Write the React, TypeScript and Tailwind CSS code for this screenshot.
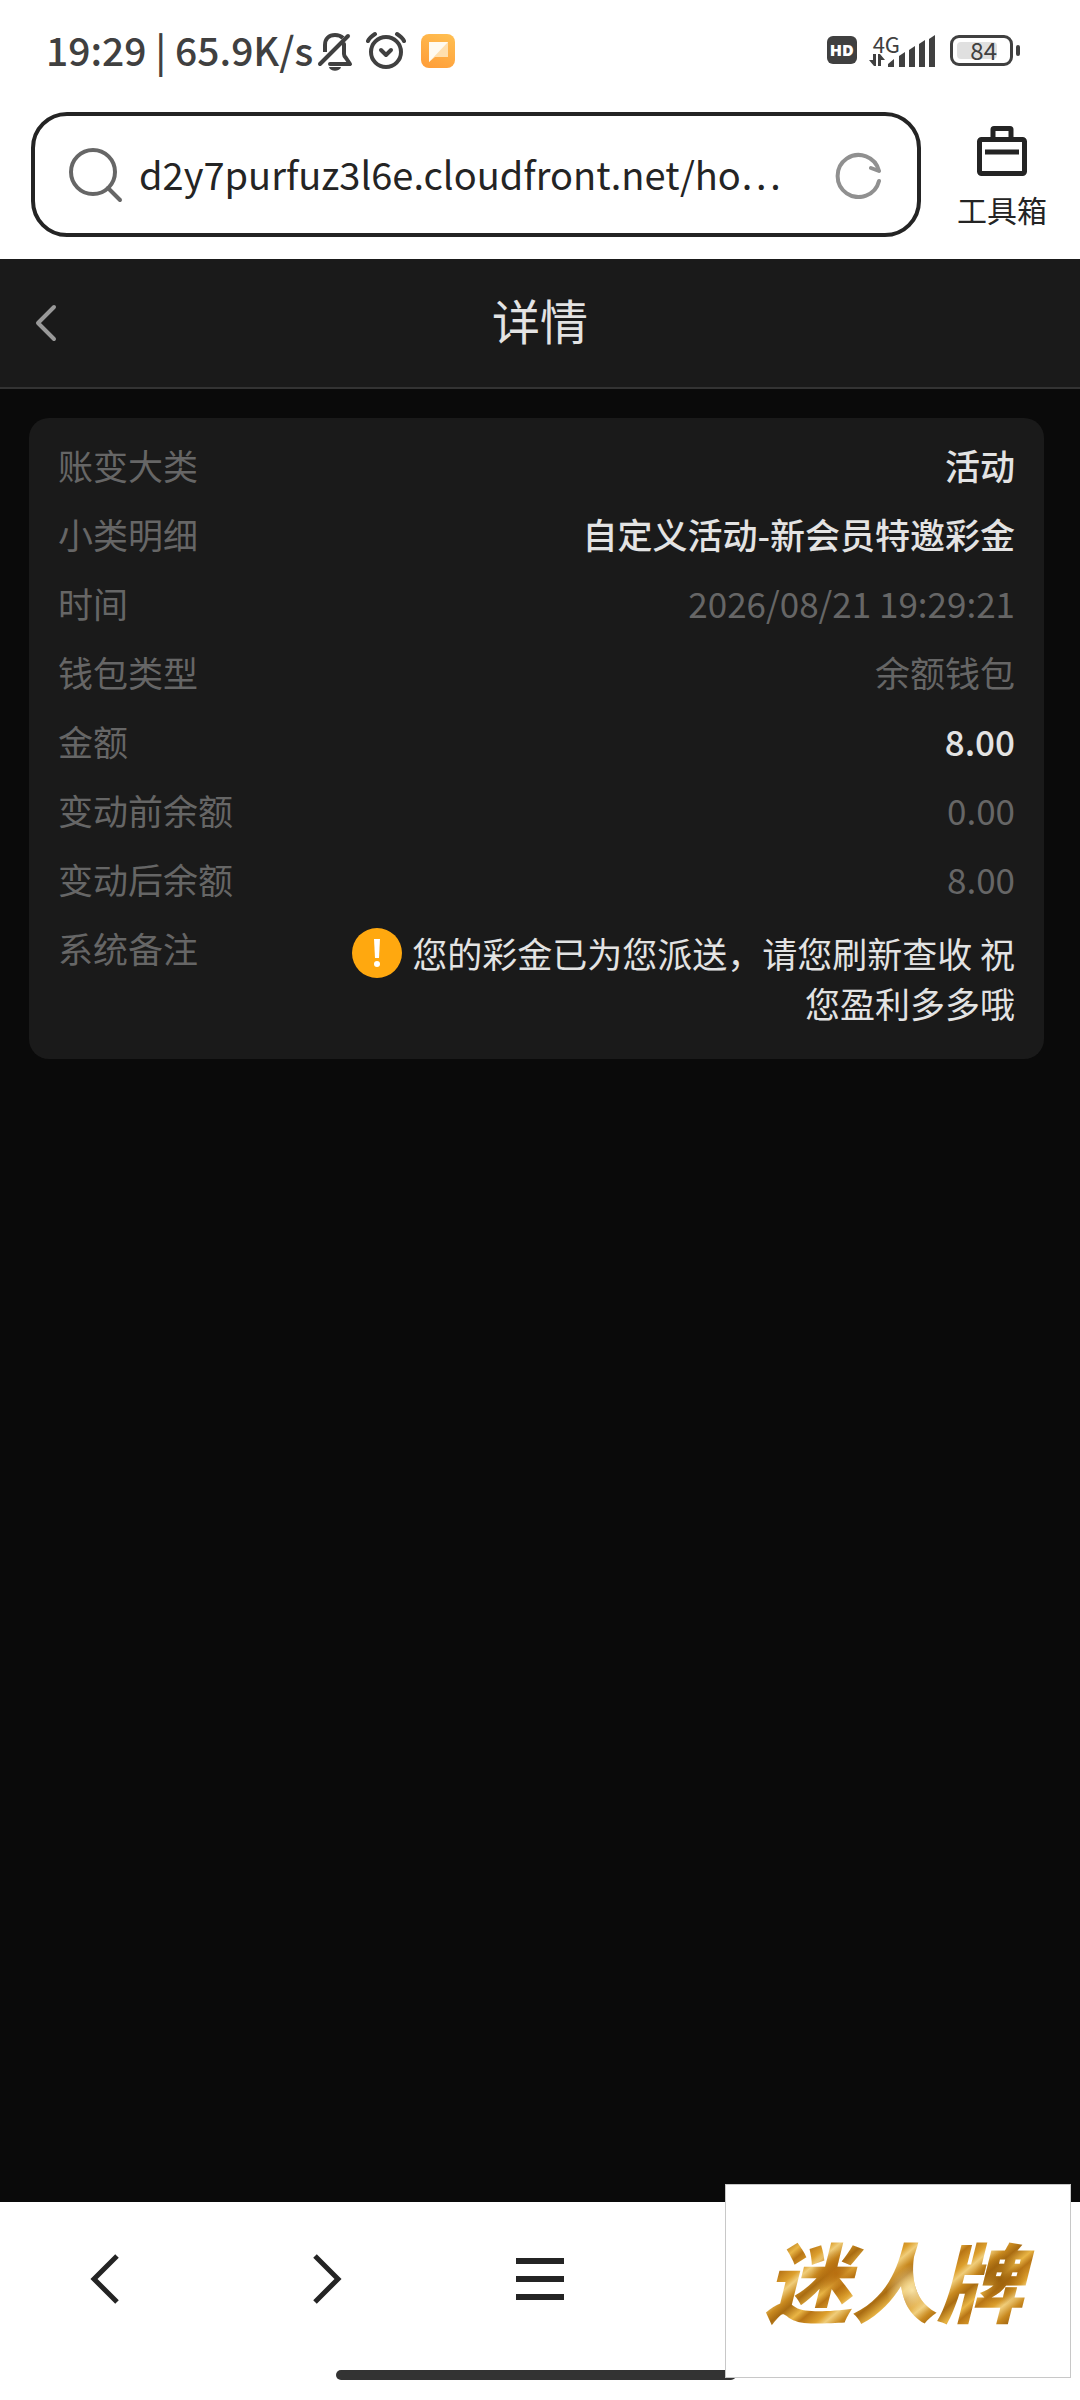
import type { ReactNode } from 'react';

interface DetailRow {
  label: string;
  value: string;
  strong?: boolean;
}

const rows: DetailRow[] = [
  { label: '账变大类', value: '活动', strong: true },
  { label: '小类明细', value: '自定义活动-新会员特邀彩金', strong: true },
  { label: '时间', value: '2026/08/21 19:29:21' },
  { label: '钱包类型', value: '余额钱包' },
  { label: '金额', value: '8.00', strong: true },
  { label: '变动前余额', value: '0.00' },
  { label: '变动后余额', value: '8.00' },
];

function StatusBar() {
  return (
    <div className="flex items-center justify-between pl-[46px] pr-[60px] pt-[23px] text-[#404040]">
      <div className="flex items-center">
        <span className="pb-1 text-[39px] leading-[52px] font-medium">19:29 | 65.9K/s</span>
        {/* muted bell */}
        <svg className="ml-1 h-10 w-9" viewBox="0 0 36 40" fill="none" stroke="currentColor" strokeWidth="4">
          <path d="M8 21V14C8 8 12 4 18 4c3 0 6 1 8 3" />
          <path d="M27 13v10q0 2 2 4l4 6H13" strokeLinejoin="round" strokeLinecap="round" />
          <path d="M3 33L31 5" strokeLinecap="round" />
          <path d="M12 36h12c-1 5-11 5-12 0z" fill="currentColor" stroke="none" />
        </svg>
        {/* alarm clock */}
        <svg className="ml-[13px] h-10 w-10" viewBox="0 0 40 40" fill="none" stroke="currentColor" strokeWidth="4">
          <circle cx="20" cy="21" r="15" />
          <path d="M15 19l5 5 5-5" strokeLinecap="round" strokeLinejoin="round" />
          <path d="M2 10c1-3 4-5 7-7M38 10c-1-3-4-5-7-7" strokeLinecap="round" />
        </svg>
        {/* message app */}
        <svg className="ml-[14px] h-9 w-9" viewBox="0 0 36 36">
          <defs>
            <linearGradient id="chat" x1="0.300" y1="1" x2="0.700" y2="0">
              <stop offset="0" stopColor="#ff9f3a" />
              <stop offset="1" stopColor="#ffbd50" />
            </linearGradient>
          </defs>
          <rect x="1" y="1" width="34" height="34" rx="8" fill="url(#chat)" />
          <path d="M9 9h19v15H15l-6 5z" fill="#ffdfae" />
          <path d="M9 9h19L9 29z" fill="#fffaf0" />
        </svg>
      </div>
      <div className="flex items-center pb-[2px]">
        <span className="flex h-7 w-[30px] items-center justify-center rounded-md bg-[#404040] font-['Open_Sans',sans-serif] text-base font-extrabold leading-none text-white">
          HD
        </span>
        <div className="ml-3 flex items-end">
          <div className="flex flex-col">
            <span className="pl-1 text-[22px] leading-[20px]">4G</span>
            <svg className="h-[14px] w-4" viewBox="0 0 16 14" fill="currentColor">
              <path d="M4 1h3v12H5L0 7h4zM9 13V1h2l5 6h-4v6z" />
            </svg>
          </div>
          <svg className="-ml-3 h-[34px] w-12" viewBox="0 0 48 34" fill="currentColor">
            <path d="M0 34v-3l6-5v8zM11 34V23l6-4v15zM21 34V17l6-4v21zM31 34V11l6-4v27zM41 34V6l6-4v32z" />
          </svg>
        </div>
        <div className="ml-[14px] flex h-[31px] w-[63px] items-center rounded-[9px] border-[3px] border-[#404040] p-1">
          <span className="flex h-full w-10 items-center justify-end rounded-sm bg-[#e0e0e0] text-2xl leading-none">84</span>
        </div>
        <span className="ml-[3px] h-[11px] w-1 rounded-full bg-[#404040]" />
      </div>
    </div>
  );
}

function AddressBar() {
  return (
    <div className="flex items-center pl-[31px] pr-[33px] pt-[33px] pb-[22px] text-[#242424]">
      <form className="flex h-[125px] flex-1 items-center rounded-[36px] border-4 border-[#242424] pl-[34px] pr-[34px]">
        <svg className="h-14 w-14 shrink-0 text-[#666]" viewBox="0 0 56 56" fill="none" stroke="currentColor" strokeWidth="4">
          <circle cx="24" cy="25" r="22" />
          <path d="M39 41l12 12" strokeLinecap="round" />
        </svg>
        <input
          aria-label="网址"
          readOnly
          defaultValue="d2y7purfuz3l6e.cloudfront.net/ho…"
          className="ml-[14px] min-w-0 flex-1 bg-transparent pb-[2px] text-[38px] leading-[60px] outline-none"
        />
        <button type="button" aria-label="刷新" className="shrink-0 text-[#909090]">
          <svg className="h-12 w-12" viewBox="0 0 48 48" fill="none" stroke="currentColor" strokeWidth="4">
            <path d="M44 30A21 21 0 1 1 44 20L36 17" strokeLinecap="round" strokeLinejoin="round" />
          </svg>
        </button>
      </form>
      <button type="button" className="ml-9 flex flex-col items-center pt-1">
        <svg className="h-[52px] w-[52px]" viewBox="0 0 52 52" fill="none" stroke="currentColor" strokeWidth="5">
          <rect x="3.500" y="14.500" width="45" height="34" rx="2" />
          <path d="M17 14V4.500q0-1 1-1h16q1 0 1 1V14" />
          <path d="M9 27h34" />
        </svg>
        <span className="mt-3 text-[30px] leading-[40px]">工具箱</span>
      </button>
    </div>
  );
}

function PageHeader() {
  return (
    <header className="grid grid-cols-3 items-center border-b-2 border-[#333] bg-[#1a1a1a] px-[30px] py-7">
      <button type="button" aria-label="返回" className="justify-self-start text-[#999]">
        <svg className="h-10 w-8" viewBox="0 0 32 40" fill="none" stroke="currentColor" strokeWidth="4">
          <path d="M24 4L8 20l16 16" strokeLinecap="round" strokeLinejoin="round" />
        </svg>
      </button>
      <h1 className="pb-2 text-center text-5xl leading-[64px] text-[#e3e3e3]">详情</h1>
    </header>
  );
}

function Row({ label, children }: { label: string; children: ReactNode }) {
  return (
    <div className="flex justify-between">
      <dt className="shrink-0 text-[#666]">{label}</dt>
      {children}
    </div>
  );
}

function DetailCard() {
  return (
    <dl className="ml-[29px] mr-9 mt-[29px] flex flex-col gap-[19px] rounded-[20px] bg-[#1a1a1a] px-[29px] pt-[22px] pb-[31px] text-[35px] leading-[50px]">
      {rows.map(row => (
        <Row key={row.label} label={row.label}>
          <dd className={row.strong ? 'font-medium text-[#e3e3e3]' : 'text-[#666]'}>{row.value}</dd>
        </Row>
      ))}
      <Row label="系统备注">
        <dd className="flex w-[663px] items-start pt-[5px] text-[#e3e3e3]">
          <svg className="h-[50px] w-[50px] shrink-0" viewBox="0 0 50 50">
            <circle cx="25" cy="25" r="25" fill="#ffa80f" />
            <path d="M22 11h6l-1 19h-4z" fill="#fff" />
            <circle cx="25" cy="36" r="3" fill="#fff" />
          </svg>
          <span className="flex-1 text-right">您的彩金已为您派送，请您刷新查收 祝您盈利多多哦</span>
        </dd>
      </Row>
    </dl>
  );
}

function BrowserNav() {
  return (
    <footer className="relative bg-white text-[#242424]">
      <nav className="grid grid-cols-5 justify-items-center pt-[45px] pb-[59px]">
        <button type="button" aria-label="后退">
          <svg className="h-16 w-10" viewBox="0 0 40 64" fill="none" stroke="currentColor" strokeWidth="5">
            <path d="M29 9L6 32l23 23" />
          </svg>
        </button>
        <button type="button" aria-label="前进">
          <svg className="h-16 w-10" viewBox="0 0 40 64" fill="none" stroke="currentColor" strokeWidth="5">
            <path d="M11 9l23 23-23 23" />
          </svg>
        </button>
        <button type="button" aria-label="菜单">
          <svg className="h-16 w-12" viewBox="0 0 48 64" fill="none" stroke="currentColor" strokeWidth="6">
            <path d="M0 14h48M0 32h48M0 50h48" />
          </svg>
        </button>
      </nav>
      <div className="flex justify-center pb-5 pr-2">
        <div className="h-[10px] w-[400px] rounded-full bg-[#333]" />
      </div>
      <div className="absolute right-[9px] bottom-[22px] flex h-[194px] w-[346px] items-center justify-center border border-[#c8c8c8] bg-white pb-1">
        <span className="bg-[radial-gradient(circle_at_28%_45%,#b86f10_0px,transparent_24px),radial-gradient(circle_at_55%_60%,#f8e3a6_0px,transparent_26px),radial-gradient(circle_at_86%_50%,#9a5f0a_0px,transparent_26px),repeating-linear-gradient(140deg,#b87515_0px,#dda02e_11px,#f0cd7a_17px,#c98a20_26px,#a96c12_33px,#e9b545_44px,#b87515_51px)] bg-clip-text pr-4 pl-2 text-[86px] leading-[110px] font-black italic text-transparent">
          迷人牌
        </span>
      </div>
    </footer>
  );
}

export default function App() {
  return (
    <div className="flex min-h-screen flex-col bg-[#0a0a0a] font-['Noto_Sans_CJK_SC',sans-serif]">
      <div className="bg-white">
        <StatusBar />
        <AddressBar />
      </div>
      <PageHeader />
      <main className="flex-1">
        <DetailCard />
      </main>
      <BrowserNav />
    </div>
  );
}
